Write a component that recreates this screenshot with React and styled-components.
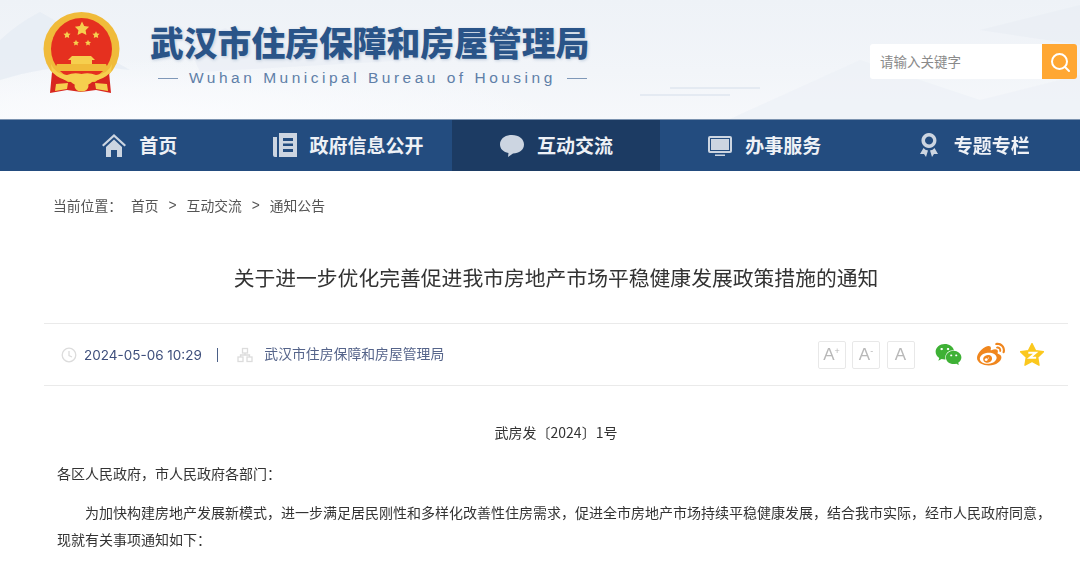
import React from 'react';
import styled, { createGlobalStyle } from 'styled-components';
import { FaWeibo, FaWeixin } from 'react-icons/fa';

const cjk = '"Noto Sans CJK SC", "Liberation Sans", sans-serif';
const comma = '\uFF0C';
const colon = '\uFF1A';

const GlobalStyle = createGlobalStyle`
  html, body {
    margin: 0;
    padding: 0;
    background: #fff;
    overflow: hidden;
  }
  body {
    font-family: ${cjk};
    color: #333;
  }
`;

const Page = styled.div`
  width: 1080px;
  height: 564px;
  overflow: hidden;
  filter: blur(0.45px);
`;

const Header = styled.header`
  position: relative;
  height: 119px;
  box-sizing: border-box;
  padding: 12px 3px 0 43px;
  display: flex;
  align-items: flex-start;
  background:
    radial-gradient(ellipse 420px 60px at 150px 119px, #fbfcfe 0%, rgba(251, 252, 254, 0) 100%),
    linear-gradient(180deg, #eef2f7 0%, #f2f5f9 60%, #f6f8fb 100%);
  overflow: hidden;
`;

const Scenery = styled.svg`
  position: absolute;
  left: 0;
  top: 0;
  width: 100%;
  height: 100%;
`;

const Emblem = styled.svg`
  position: relative;
  width: 77px;
  height: 83px;
  flex: none;
`;

const Brand = styled.div`
  position: relative;
  margin-left: 30px;
  width: 440px;
  padding-top: 7px;
`;

const BrandName = styled.h1`
  margin: 0;
  font-size: 33.8px;
  line-height: 46px;
  font-weight: 900;
  white-space: nowrap;
  color: #2a5488;
  text-shadow: 1px 1px 3px rgba(42, 84, 136, 0.25);
`;

const BrandSub = styled.div`
  margin-top: 1px;
  padding-left: 8px;
  display: flex;
  align-items: center;
  gap: 11px;
  font-family: "Liberation Sans", sans-serif;
  font-size: 15.5px;
  line-height: 24px;
  letter-spacing: 3.5px;
  color: #5f7fa8;
  white-space: nowrap;
`;

const Dash = styled.span`
  width: 20px;
  height: 1px;
  background: #7f98b8;
`;

const Search = styled.div`
  position: relative;
  margin: 32px 0 0 auto;
  display: flex;
  width: 207px;
  height: 35px;
  border-radius: 3px;
  overflow: hidden;
`;

const SearchInput = styled.div`
  flex: 1;
  background: #fff;
  padding-left: 10px;
  font-size: 13.5px;
  line-height: 35px;
  color: #8a8a8a;
`;

const SearchButton = styled.div`
  width: 35px;
  background: #ffa733;
  display: flex;
  align-items: center;
  justify-content: center;
`;

const Nav = styled.nav`
  height: 52px;
  box-sizing: border-box;
  padding: 0 2px 0 35px;
  display: grid;
  grid-template-columns: repeat(5, 208.4px);
  background: #234c7f;
  border-top: 1px solid #7c93b0;
`;

const NavItem = styled.a`
  display: flex;
  align-items: center;
  justify-content: center;
  gap: 12px;
  padding-bottom: 2px;
  background: ${p => (p.$active ? '#1c3b63' : 'transparent')};
  color: #eef1f6;
  font-size: 19px;
  font-weight: 700;
  white-space: nowrap;
`;

const NavIcon = styled.svg`
  width: 26px;
  height: 26px;
  flex: none;
  fill: #ccd5e1;
`;

const Crumbs = styled.div`
  margin-top: 23px;
  padding-left: 53px;
  display: flex;
  align-items: center;
  font-size: 13.8px;
  line-height: 20px;
  color: #555;
`;

const CrumbLabel = styled.span`
  width: 78px;
`;

const CrumbSep = styled.span`
  width: 28px;
  text-align: center;
  font-family: "Liberation Sans", sans-serif;
  padding-top: 2px;
`;

const Article = styled.main`
  margin: 0 12px 0 44px;
`;

const Title = styled.h2`
  margin: 41px 0 26px;
  text-align: center;
  font-size: 20.8px;
  line-height: 40px;
  font-weight: 400;
  color: #333;
  white-space: nowrap;
`;

const Meta = styled.div`
  height: 61px;
  padding-left: 17px;
  display: flex;
  align-items: center;
  border-top: 1px solid #eaeaea;
  border-bottom: 1px solid #eaeaea;
`;

const MetaIcon = styled.svg`
  width: 16px;
  height: 16px;
  flex: none;
  stroke: #dcdcdc;
  fill: none;
  stroke-width: 1.3;
`;

const MetaDate = styled.span`
  margin-left: 7px;
  font-family: Inter, "Liberation Sans", sans-serif;
  font-size: 13.5px;
  color: #3e4f7c;
`;

const MetaBar = styled.span`
  width: 1.5px;
  height: 14px;
  margin: 0 19px 0 15px;
  background: #4a5f86;
`;

const MetaSource = styled.span`
  margin-left: 11px;
  padding-bottom: 3px;
  font-size: 13.85px;
  color: #55648a;
`;

const Tools = styled.div`
  margin-left: auto;
  display: flex;
  align-items: center;
`;

const FontButton = styled.span`
  width: 26px;
  height: 26px;
  margin-right: 6.5px;
  display: flex;
  align-items: center;
  justify-content: center;
  border: 1px solid #e8e8e8;
  border-radius: 2px;
  font-family: "Liberation Sans", sans-serif;
  font-size: 17px;
  color: #b8b8b8;
  sup {
    font-size: 9px;
    line-height: 0;
    margin-top: -8px;
  }
`;

const Shares = styled.div`
  margin: 0 24px 0 14px;
  display: flex;
  align-items: center;
  gap: 15px;
`;

const Body = styled.div`
  font-size: 14px;
  line-height: 27px;
  color: #333;
`;

const DocNumber = styled.p`
  margin: 33px 0 14px;
  text-align: center;
`;

const Para = styled.p`
  margin: 0 0 12px;
  padding: 0 15px 0 13px;
  text-indent: ${p => (p.$indent ? '28px' : '0')};
`;

const star = (cx, cy, r) => {
  const pts = [];
  for (let i = 0; i < 10; i++) {
    const rad = i % 2 ? r * 0.5 : r;
    const a = (Math.PI / 5) * i - Math.PI / 2;
    pts.push(`${(cx + rad * Math.cos(a)).toFixed(1)},${(cy + rad * Math.sin(a)).toFixed(1)}`);
  }
  return pts.join(' ');
};

const NationalEmblem = () => (
  <Emblem viewBox="0 0 77 83">
    <ellipse cx="38.5" cy="37" rx="38" ry="37" fill="#f0bb3a" />
    <ellipse cx="38.5" cy="37" rx="30.5" ry="31" fill="#e5301f" />
    <polygon points={star(39, 17, 7.5)} fill="#f6cf4e" />
    <polygon points={star(24, 23, 3.8)} fill="#f6cf4e" />
    <polygon points={star(53, 23, 3.8)} fill="#f6cf4e" />
    <polygon points={star(33, 31, 3.2)} fill="#f6cf4e" />
    <polygon points={star(45, 31, 3.2)} fill="#f6cf4e" />
    <path d="M25 48 L29 44 H48 L52 48 H49 V52 H28 V48 Z" fill="#f6cf4e" />
    <path d="M14 52 H63 L66 59 H11 Z" fill="#f0bb3a" />
    <path d="M9 60 L7 81 L24 78 L38 80 L53 78 L68 81 L66 60 L52 70 H25 Z" fill="#d8261f" />
    <path d="M8 52 Q12 62 24 63 Q31 60 38.5 62 Q46 60 53 63 Q65 62 69 52 L68 60 Q60 68 50 69 Q46 74 38.5 74 Q31 74 27 69 Q17 68 9 60 Z" fill="#f6cf4e" />
    <path d="M13 72 L25 71 L24 77 L12 79 Z M52 71 L64 72 L65 79 L53 77 Z" fill="#f6cf4e" />
    <ellipse cx="38.5" cy="74" rx="7" ry="5.5" fill="#f6cf4e" />
  </Emblem>
);

const navItems = [
  {
    label: '首页',
    icon: <path d="M13 2 L1 13 L2.5 14.5 L13 5 L23.5 14.5 L25 13 Z M5 15 L13 7.5 L21 15 V25 H16 V18 H10 V25 H5 Z" />,
  },
  {
    label: '政府信息公开',
    icon: <path fillRule="evenodd" d="M7 1 H25 V25 H7 Z M11 6 V9 H21 V6 Z M11 11.5 V14 H21 V11.5 Z M11 17 V20 H21 V17 Z M1 5 H5 V25 H3 Q1 25 1 23 Z" />,
  },
  {
    label: '互动交流',
    active: true,
    icon: <path d="M13 3 C20 3 25 7 25 12.5 C25 18 20 21.5 14 21.5 L9 25 L9.5 21 C4.5 20 1 17 1 12.5 C1 7 6 3 13 3 Z" />,
  },
  {
    label: '办事服务',
    icon: <path fillRule="evenodd" d="M3 4 H23 Q25 4 25 6 V19 Q25 21 23 21 H3 Q1 21 1 19 V6 Q1 4 3 4 Z M3 6 V19 H23 V6 Z M4 7 H22 V18 H4 Z M8 22.5 H18 V24 H8 Z" />,
  },
  {
    label: '专题专栏',
    icon: <path fillRule="evenodd" d="M13 1 A7.5 7.5 0 1 1 12.9 1 Z M13 4.5 A4 4 0 1 0 13.1 4.5 Z M7.5 16 L4 22 L8 22 L10 25 L12 18.5 Q9 18 7.5 16 Z M18.5 16 L22 22 L18 22 L16 25 L14 18.5 Q17 18 18.5 16 Z" />,
  },
];

const intro = [
  '为加快构建房地产发展新模式',
  '进一步满足居民刚性和多样化改善性住房需求',
  '促进全市房地产市场持续平稳健康发展',
  '结合我市实际',
  '经市人民政府同意',
  '现就有关事项通知如下',
].join(comma) + colon;

export default function App() {
  return (
    <Page>
      <GlobalStyle />
      <Header>
        <Scenery viewBox="0 0 1080 119" preserveAspectRatio="none">
          <path d="M0 40 Q20 22 40 12 Q65 25 95 50 L130 70 Q60 60 0 80 Z" fill="#e6ecf4" opacity="0.8" />
          <path d="M190 50 L225 28 L260 50 L330 42 L410 60 L200 72 Z" fill="#e9eef5" opacity="0.7" />
          <path d="M640 95 H730 M670 88 H760" stroke="#e4eaf2" strokeWidth="2" />
          <path d="M730 119 L860 60 L980 100 L1080 75 V119 Z" fill="#edf1f6" opacity="0.7" />
          <path d="M980 30 L1080 5 V45 Z" fill="#e8edf4" opacity="0.6" />
        </Scenery>
        <NationalEmblem />
        <Brand>
          <BrandName>武汉市住房保障和房屋管理局</BrandName>
          <BrandSub>
            <Dash />
            <span>Wuhan Municipal Bureau of Housing</span>
            <Dash />
          </BrandSub>
        </Brand>
        <Search>
          <SearchInput>请输入关键字</SearchInput>
          <SearchButton>
            <svg width="22" height="22" viewBox="0 0 22 22" fill="none" stroke="#fff" strokeWidth="2">
              <circle cx="10.5" cy="10.5" r="7.5" />
              <path d="M16 16 L20 20" strokeLinecap="round" />
            </svg>
          </SearchButton>
        </Search>
      </Header>

      <Nav>
        {navItems.map(item => (
          <NavItem key={item.label} $active={item.active}>
            <NavIcon viewBox="0 0 26 26">{item.icon}</NavIcon>
            {item.label}
          </NavItem>
        ))}
      </Nav>

      <Crumbs>
        <CrumbLabel>{'当前位置' + colon}</CrumbLabel>
        <span>首页</span>
        <CrumbSep>&gt;</CrumbSep>
        <span>互动交流</span>
        <CrumbSep>&gt;</CrumbSep>
        <span>通知公告</span>
      </Crumbs>

      <Article>
        <Title>关于进一步优化完善促进我市房地产市场平稳健康发展政策措施的通知</Title>
        <Meta>
          <MetaIcon viewBox="0 0 16 16">
            <circle cx="8" cy="8" r="6.8" />
            <path d="M8 4 V8.5 L11 10" />
          </MetaIcon>
          <MetaDate>2024-05-06 10:29</MetaDate>
          <MetaBar />
          <MetaIcon viewBox="0 0 16 16">
            <rect x="5.5" y="1.5" width="5" height="4.5" />
            <rect x="1" y="10" width="5" height="4.5" />
            <rect x="10" y="10" width="5" height="4.5" />
            <path d="M8 6 V8 M3.5 10 V8 H12.5 V10" />
          </MetaIcon>
          <MetaSource>武汉市住房保障和房屋管理局</MetaSource>
          <Tools>
            <FontButton>A<sup>+</sup></FontButton>
            <FontButton>A<sup>-</sup></FontButton>
            <FontButton>A</FontButton>
            <Shares>
              <FaWeixin size={27} color="#3eb135" />
              <FaWeibo size={28} color="#f0861d" />
              <svg width="24" height="24" viewBox="0 0 26 26">
                <polygon points={star(13, 13.5, 13)} fill="#fbc81e" stroke="#fbc81e" strokeWidth="1.5" strokeLinejoin="round" />
                <path d="M9 10.5 H17 L10.5 16 H17.5" fill="none" stroke="#fff" strokeWidth="2.2" />
              </svg>
            </Shares>
          </Tools>
        </Meta>
        <Body>
          <DocNumber>武房发〔2024〕1号</DocNumber>
          <Para>{'各区人民政府' + comma + '市人民政府各部门' + colon}</Para>
          <Para $indent>{intro}</Para>
        </Body>
      </Article>
    </Page>
  );
}
